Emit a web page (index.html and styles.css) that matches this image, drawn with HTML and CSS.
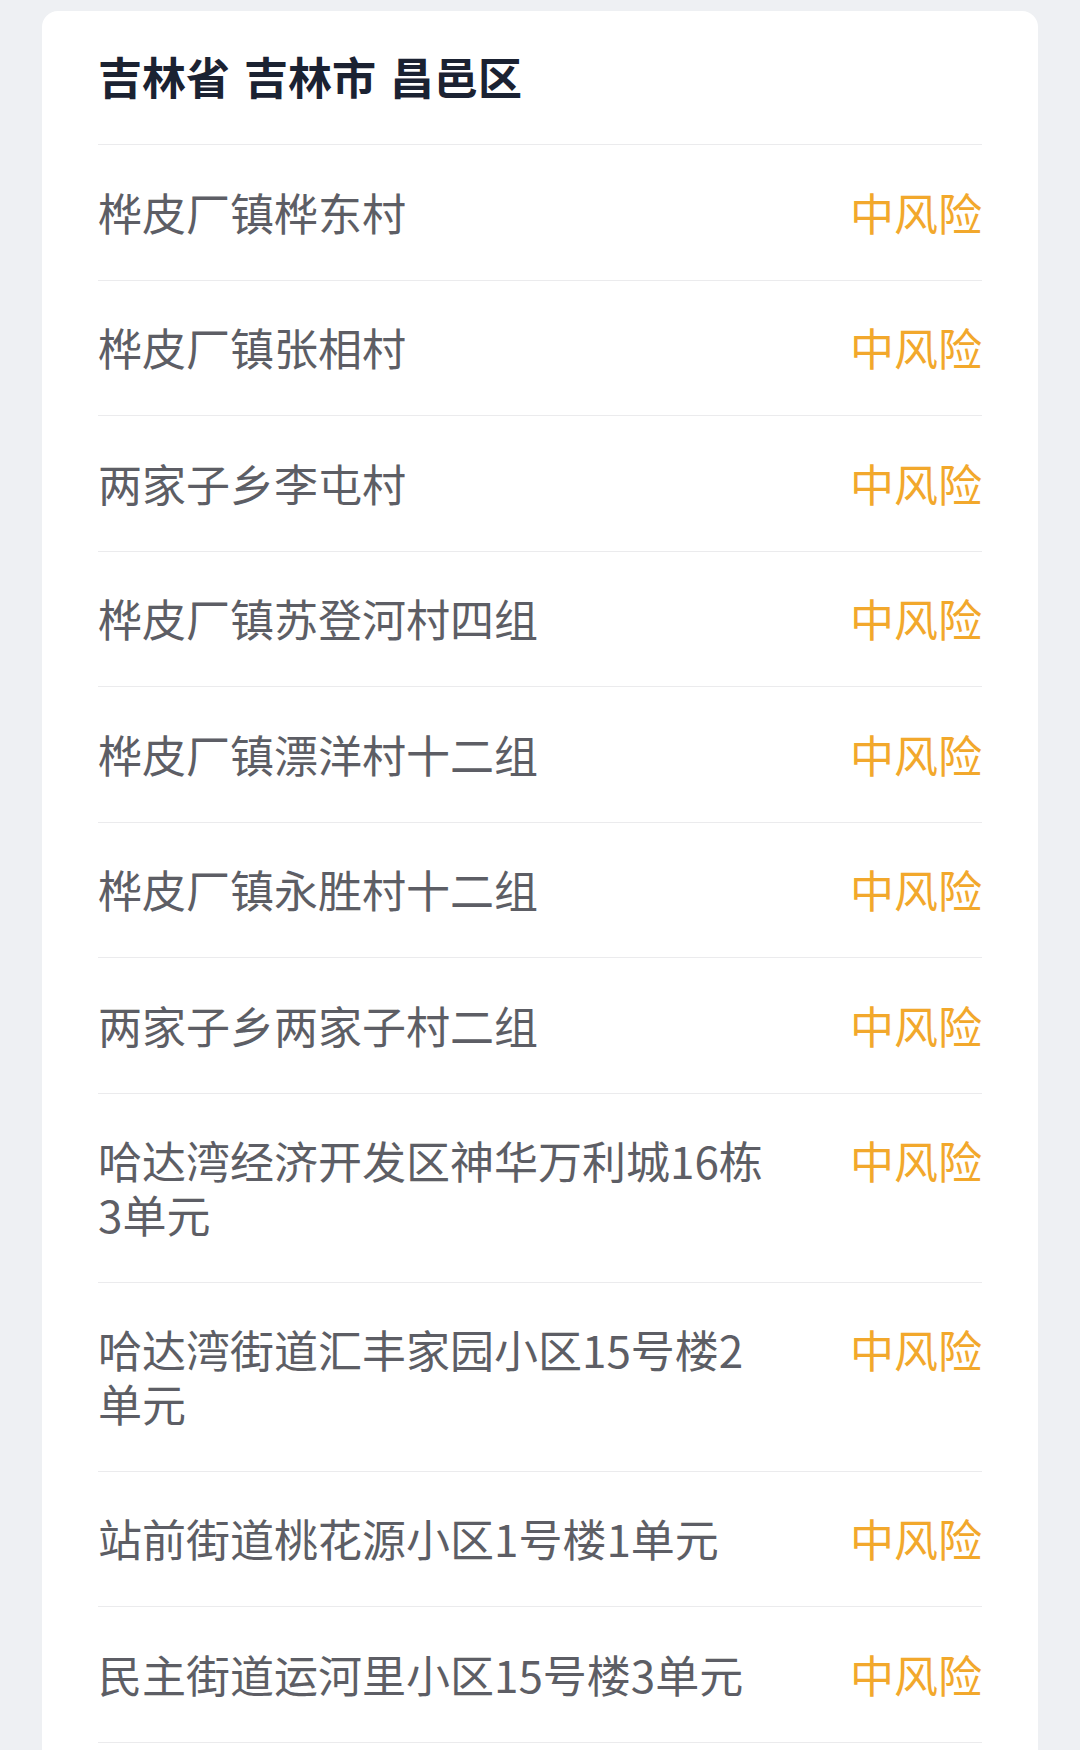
FILE: index.html
```html
<!DOCTYPE html>
<html lang="zh-CN">
<head>
<meta charset="utf-8">
<title>吉林省 吉林市 昌邑区</title>
<link rel="stylesheet" href="styles.css">
</head>
<body>
<main class="page">
  <section class="card">
    <h2 class="card-title">吉林省 吉林市 昌邑区</h2>
    <ul class="risk-list">
      <li class="risk-row"><span class="place">桦皮厂镇桦东村</span><span class="level">中风险</span></li>
      <li class="risk-row"><span class="place">桦皮厂镇张相村</span><span class="level">中风险</span></li>
      <li class="risk-row"><span class="place">两家子乡李屯村</span><span class="level">中风险</span></li>
      <li class="risk-row"><span class="place">桦皮厂镇苏登河村四组</span><span class="level">中风险</span></li>
      <li class="risk-row"><span class="place">桦皮厂镇漂洋村十二组</span><span class="level">中风险</span></li>
      <li class="risk-row"><span class="place">桦皮厂镇永胜村十二组</span><span class="level">中风险</span></li>
      <li class="risk-row"><span class="place">两家子乡两家子村二组</span><span class="level">中风险</span></li>
      <li class="risk-row"><span class="place">哈达湾经济开发区神华万利城16栋3单元</span><span class="level">中风险</span></li>
      <li class="risk-row"><span class="place">哈达湾街道汇丰家园小区15号楼2单元</span><span class="level">中风险</span></li>
      <li class="risk-row"><span class="place">站前街道桃花源小区1号楼1单元</span><span class="level">中风险</span></li>
      <li class="risk-row"><span class="place">民主街道运河里小区15号楼3单元</span><span class="level">中风险</span></li>
    </ul>
  </section>
</main>
</body>
</html>
```

FILE: styles.css
```css
html, body {
  margin: 0;
  padding: 0;
  background: #eef0f3;
}

body {
  font-family: "Noto Sans CJK SC", "Noto Sans", sans-serif;
  overflow: hidden;
  height: 1750px;
}

.page {
  padding: 11px 42px 0;
}

.card {
  background: #ffffff;
  border-radius: 16px;
  padding: 0 56px;
  min-height: 1760px;
}

.card-title {
  margin: 0;
  padding: 38px 0 41px;
  font-size: 44px;
  line-height: 54px;
  font-weight: 700;
  color: #1b2232;
  word-spacing: 4px;
  border-bottom: 1px solid #ebebed;
}

.risk-list {
  list-style: none;
  margin: 0;
  padding: 0;
}

.risk-row {
  display: flex;
  align-items: flex-start;
  justify-content: space-between;
  padding: 40.5px 0;
  border-bottom: 1px solid #ebebed;
}

.place {
  max-width: 676px;
  font-size: 44px;
  line-height: 53.5px;
  color: #5d5e65;
}

.level {
  flex-shrink: 0;
  font-size: 44px;
  line-height: 53.5px;
  color: #f2a82c;
}
```
